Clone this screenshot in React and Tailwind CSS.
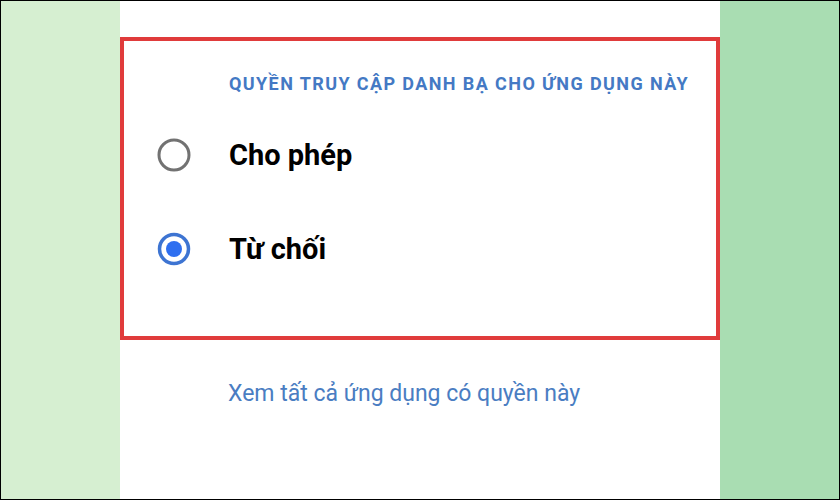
import React, { useState } from 'react';

function Radio({ checked }) {
  return (
    <svg width="34" height="34" viewBox="0 0 34 34" className="shrink-0">
      {checked ? (
        <>
          <circle cx="17" cy="17" r="14.5" fill="none" stroke="#3d74d2" strokeWidth="3.5" />
          <circle cx="17" cy="17" r="8" fill="#2f6ff0" />
        </>
      ) : (
        <circle cx="17" cy="17" r="15" fill="none" stroke="#727272" strokeWidth="3" />
      )}
    </svg>
  );
}

export default function App() {
  const [choice, setChoice] = useState('deny');

  const options = [
    { id: 'allow', label: 'Cho phép' },
    { id: 'deny', label: 'Từ chối' },
  ];

  return (
    <div
      className="w-[840px] h-[500px] border border-black flex overflow-hidden"
      style={{ fontFamily: 'Roboto, "Noto Sans", sans-serif' }}
    >
      <div className="w-[119px] h-full bg-[#d6efd1]" />

      <div className="w-[600px] h-full bg-white pt-[36px] flex flex-col">
        <div className="h-[303px] border-4 border-[#e03b3b] pl-[33px] pt-[33px] flex flex-col">
          <p className="pl-[72px] text-[18px] leading-[20px] font-bold tracking-[1.4px] text-[#4479c4] whitespace-nowrap">
            QUYỀN TRUY CẬP DANH BẠ CHO ỨNG DỤNG NÀY
          </p>

          <div className="mt-[41px] flex flex-col gap-[54px]">
            {options.map((o) => (
              <button
                key={o.id}
                onClick={() => setChoice(o.id)}
                className="h-[40px] flex items-center gap-[38px] text-left cursor-pointer"
              >
                <Radio checked={choice === o.id} />
                <span className="text-[29px] leading-[40px] font-bold text-black">{o.label}</span>
              </button>
            ))}
          </div>
        </div>

        <a className="mt-[41px] pl-[108px] text-[23px] leading-[26px] text-[#4a7dc2] cursor-pointer">
          Xem tất cả ứng dụng có quyền này
        </a>
      </div>

      <div className="flex-1 h-full bg-[#a9ddb2]" />
    </div>
  );
}
